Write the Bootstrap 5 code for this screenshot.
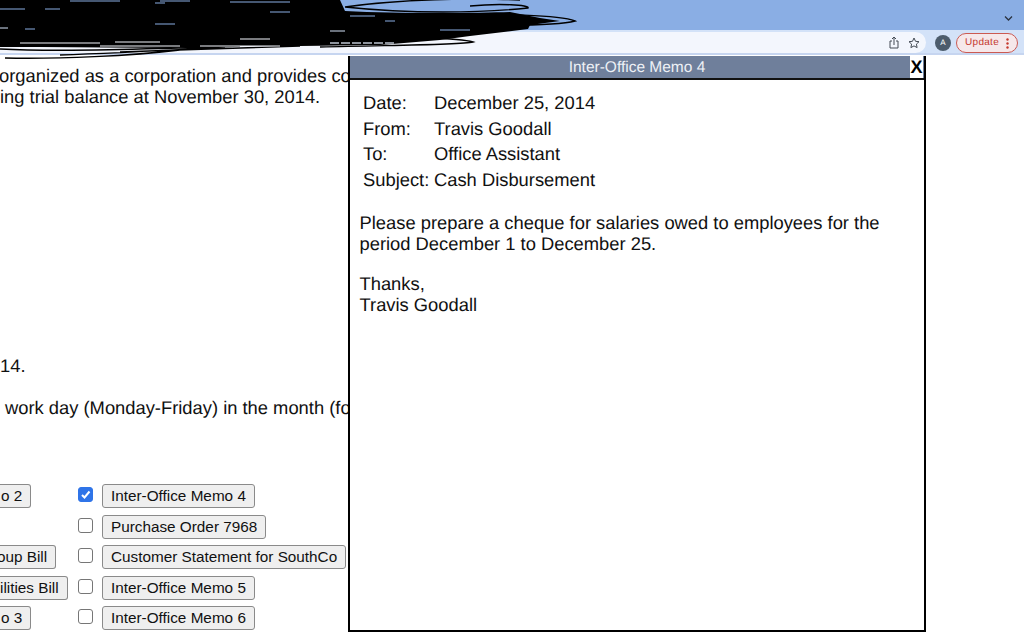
<!DOCTYPE html>
<html lang="en">
<head>
  <meta charset="UTF-8" />
  <title>Inter-Office Memo 4</title>
  <link href="https://cdn.jsdelivr.net/npm/bootstrap@5.3.0/dist/css/bootstrap.min.css" rel="stylesheet" />
  <style>
    html, body { height: 640px; overflow: hidden; }
    body { font-family: "Liberation Sans", Arial, sans-serif; font-size: 18.35px; line-height: 21px; color: #111; background: #fff; text-rendering: geometricPrecision; }
    .tab-strip { height: 30px; background: #8aaee4; padding-right: 11px; }
    .tool-strip { height: 25px; background: #d3e2f8; border-bottom: 2px solid #c6d5f0; padding-right: 6px; }
    .addr-field { height: 21px; margin-top: 2px; background: #f3f6fd; border-radius: 0 11px 11px 0; width: 926px; padding-right: 6px; gap: 9px; }
    .avatar-dot { width: 16px; height: 16px; margin-top: 3px; border-radius: 50%; background: #4c5c6c; color: #fff; font-size: 8px; line-height: 16px; text-align: center; margin-left: 9px; }
    .update-pill { height: 20px; width: 62px; margin-top: 3px; margin-left: 5px; border: 1px solid #cb5a52; border-radius: 10px; background: #f6e8ea; color: #c5392f; font-size: 10px; letter-spacing: .3px; line-height: 18px; padding: 0 8px 0 8px; }
    .scribble-layer { position: absolute; left: 0; top: 0; width: 600px; height: 60px; }
    .page-area { height: 585px; overflow: hidden; position: relative; }
    .clip-col { width: 348px; overflow: hidden; white-space: nowrap; }
    .top-text { padding-top: 10px; margin-left: -1px; }
    .top-text .second-line { margin-left: 1px; }
    .mid-text { margin-top: 248px; }
    .work-line { margin-top: 21px; margin-left: 5px; }
    .doc-rows { margin-top: 66px; gap: 6.6px; }
    .doc-row { height: 24px; }
    .left-slot { width: 78px; flex: none; }
    .old-btn { height: 24px; padding: 0 8px; font-size: 15.3px; line-height: 22px; color: #111; background: #efefef; border: 1px solid #8a8a8a; border-radius: 3px; white-space: nowrap; }
    .old-btn.cut-left { border-left: 0; border-radius: 0 3px 3px 0; padding-left: 0; }
    .old-btn.cut-more { margin-left: -3px; }
    .old-btn.cut-pad { padding-left: 1px; }
    .old-check { width: 15px; height: 15px; margin: 0 9px 3px 0; flex: none; appearance: none; background: #fff; border: 1px solid #767676; border-radius: 3px; display: block; }
    .old-check:checked { background: #2f74e8; border-color: #2f74e8; }
    .check-wrap { position: relative; flex: none; }
    .check-wrap svg { position: absolute; left: 2px; top: 2px; }
    .memo-box { position: absolute; left: 348px; top: 1px; width: 578px; height: 576px; background: #fff; border: 2px solid #000; border-top: 0; }
    .memo-head { height: 24px; background: #6f7f9b; border-bottom: 2px solid #111; color: #eef1f6; font-size: 15.5px; line-height: 24px; text-align: center; position: relative; }
    .memo-close { position: absolute; right: 1px; top: 0; width: 13px; height: 22px; background: #fff; color: #000; font-size: 18px; font-weight: 700; line-height: 22px; text-align: center; }
    .memo-meta { padding: 10px 0 0 13px; display: grid; grid-template-columns: 71px 1fr; grid-auto-rows: 25.7px; line-height: 25.7px; }
    .memo-text { margin: 19px 0 0 9.5px; }
    .memo-sign { margin-top: 19px; }
  </style>
</head>
<body>
<div class="tab-strip d-flex justify-content-end align-items-end">
  <svg class="mb-2" width="9" height="6" viewBox="0 0 9 6"><path d="M1 0.5l3.5 3.5L8 0.5" fill="none" stroke="#2b3340" stroke-width="1.3"/></svg>
</div>
<div class="tool-strip d-flex align-items-center">
  <div class="addr-field d-flex align-items-center justify-content-end">
    <svg width="10" height="13" viewBox="0 0 10 13"><path d="M3 5H1v7h8V5H7M5 9V1M3 3l2-2 2 2" fill="none" stroke="#444b55" stroke-width="1"/></svg>
    <svg width="12" height="12" viewBox="0 0 12 12"><path d="M6 1l1.5 3.3 3.5.4-2.6 2.4.7 3.5L6 8.9l-3.1 1.7.7-3.5L1 4.7l3.5-.4z" fill="none" stroke="#444b55" stroke-width="1"/></svg>
  </div>
  <div class="avatar-dot">A</div>
  <div class="update-pill d-flex align-items-center justify-content-between">
    <span>Update</span>
    <svg width="3" height="11" viewBox="0 0 3 11"><circle cx="1.5" cy="1.5" r="1.2" fill="#c5392f"/><circle cx="1.5" cy="5.5" r="1.2" fill="#c5392f"/><circle cx="1.5" cy="9.5" r="1.2" fill="#c5392f"/></svg>
  </div>
</div>

<svg class="scribble-layer" viewBox="0 0 600 60">
  <path d="M0 0H340L345 11C400 14 480 13 510 12L540 18 560 21 530 25 528 29 470 36 440 40 380 45 300 46 240 46 170 48 40 47 0 47Z" fill="#000"/>
  <path d="M0 2C100 -1 250 1 340 6M345 7C400 -1 470 -2 520 0M345 7C410 14 480 13 528 8C530 5 500 3 470 6M440 16C500 13 560 15 575 21C560 25 500 26 440 25M350 38C400 36 460 38 473 42C460 45 400 45 320 47M5 58C60 59 130 56 180 50M0 49C60 52 150 49 240 46M60 55C120 53 170 50 225 47M120 52C180 50 230 48 300 46" fill="none" stroke="#000" stroke-width="1.4"/>
  <path d="M70 1H120M160 1H190M155 3H165M230 2H290M0 9H25M45 9H60M155 24H175M25 29H35M270 12H290M350 16H375M385 21H395M440 30H470" fill="none" stroke="#8aaee4" stroke-width="1.2"/>
  <path d="M20 43H100M115 42H160M100 46H180M200 46H280M240 39H270" fill="none" stroke="#f3f6fd" stroke-width="1"/>
  <path d="M0 28H8M330 31H345" fill="none" stroke="#d3e2f8" stroke-width="1"/>
  <path d="M330 43H395" fill="none" stroke="#8d939c" stroke-width="2" stroke-dasharray="9 2"/>
</svg>

<div class="page-area">
  <div class="clip-col">
    <div class="top-text">
      <div>organized as a corporation and provides co</div>
      <div class="second-line">ing trial balance at November 30, 2014.</div>
    </div>
    <div class="mid-text">14.</div>
    <div class="work-line">work day (Monday-Friday) in the month (fo</div>
    <div class="doc-rows d-flex flex-column">
      <div class="doc-row d-flex align-items-center">
        <div class="left-slot"><button class="old-btn cut-left cut-pad">o 2</button></div>
        <div class="check-wrap"><input class="old-check" type="checkbox" checked><svg width="11" height="11" viewBox="0 0 11 11"><path d="M2 6l2.5 2.5L9.5 2.5" fill="none" stroke="#fff" stroke-width="2"/></svg></div>
        <button class="old-btn">Inter-Office Memo 4</button>
      </div>
      <div class="doc-row d-flex align-items-center">
        <div class="left-slot"></div>
        <div class="check-wrap"><input class="old-check" type="checkbox"></div>
        <button class="old-btn">Purchase Order 7968</button>
      </div>
      <div class="doc-row d-flex align-items-center">
        <div class="left-slot"><button class="old-btn cut-left cut-more">oup Bill</button></div>
        <div class="check-wrap"><input class="old-check" type="checkbox"></div>
        <button class="old-btn">Customer Statement for SouthCo</button>
      </div>
      <div class="doc-row d-flex align-items-center">
        <div class="left-slot"><button class="old-btn cut-left">ilities Bill</button></div>
        <div class="check-wrap"><input class="old-check" type="checkbox"></div>
        <button class="old-btn">Inter-Office Memo 5</button>
      </div>
      <div class="doc-row d-flex align-items-center">
        <div class="left-slot"><button class="old-btn cut-left cut-pad">o 3</button></div>
        <div class="check-wrap"><input class="old-check" type="checkbox"></div>
        <button class="old-btn">Inter-Office Memo 6</button>
      </div>
    </div>
  </div>

  <div class="memo-box">
    <div class="memo-head">Inter-Office Memo 4<div class="memo-close">X</div></div>
    <div class="memo-meta">
      <div>Date:</div><div>December 25, 2014</div>
      <div>From:</div><div>Travis Goodall</div>
      <div>To:</div><div>Office Assistant</div>
      <div>Subject:</div><div>Cash Disbursement</div>
    </div>
    <div class="memo-text">
      <div>Please prepare a cheque for salaries owed to employees for the<br>period December 1 to December 25.</div>
      <div class="memo-sign">Thanks,<br>Travis Goodall</div>
    </div>
  </div>
</div>
<script src="https://cdn.jsdelivr.net/npm/bootstrap@5.3.0/dist/js/bootstrap.bundle.min.js"></script>
</body>
</html>
